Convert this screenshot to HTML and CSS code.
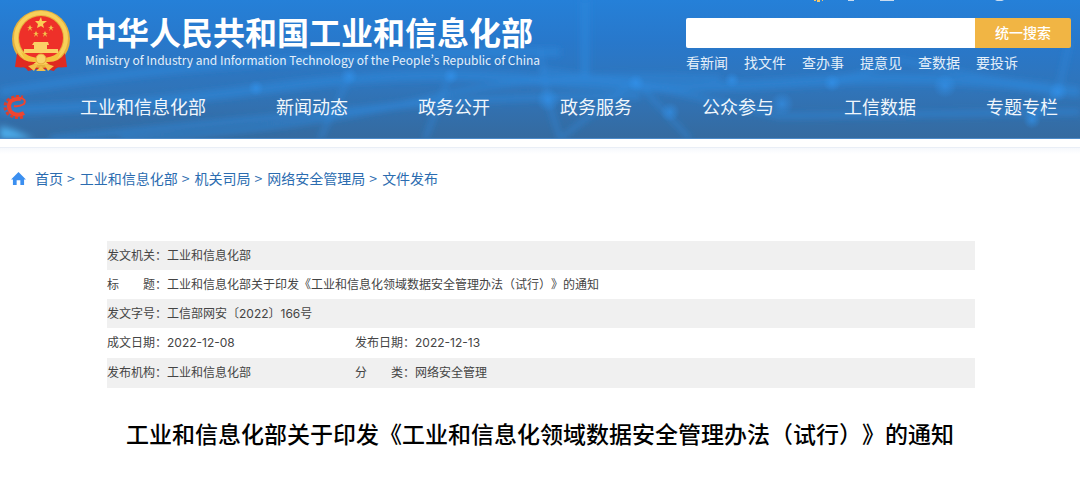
FILE: index.html
```html
<!DOCTYPE html>
<html lang="zh-CN">
<head>
<meta charset="utf-8">
<title>工业和信息化部关于印发《工业和信息化领域数据安全管理办法（试行）》的通知</title>
<link rel="stylesheet" href="styles.css">
</head>
<body>

<header class="header">

	<svg class="header-bg" viewBox="0 0 1080 139" preserveAspectRatio="none" aria-hidden="true">
		<defs>
			<linearGradient id="sky" x1="0" y1="0" x2="0" y2="1">
				<stop offset="0" stop-color="#2580d8"/>
				<stop offset="0.3" stop-color="#2878cb"/>
				<stop offset="0.65" stop-color="#3074b9"/>
				<stop offset="1" stop-color="#356a9f"/>
			</linearGradient>
			<radialGradient id="dot">
				<stop offset="0" stop-color="#3396f2" stop-opacity="0.55"/>
				<stop offset="1" stop-color="#3396f2" stop-opacity="0"/>
			</radialGradient>
			<filter id="soft" x="-10%" y="-50%" width="120%" height="200%">
				<feGaussianBlur stdDeviation="3"/>
			</filter>
		</defs>
		<rect width="1080" height="139" fill="url(#sky)"/>
		<g filter="url(#soft)" fill="none" stroke="#2f88dc" stroke-opacity="0.6">
			<path stroke-width="8" d="M0 92Q130 70 300 60T560 52"/>
			<path stroke-width="10" d="M0 110Q120 108 270 88T540 80T800 82T1080 92"/>
			<path stroke-width="6" d="M50 139Q200 125 350 110T640 96"/>
			<path stroke-width="5" d="M120 139Q300 130 420 100T720 78"/>
			<path stroke-width="5" d="M540 70L640 84L780 116L1080 112"/>
			<path stroke-width="8" d="M585 0V78"/>
			<path stroke-width="4" d="M540 50L548 100L560 139M635 80L560 139M635 80L690 139M1070 40L1058 92L1030 120M350 75L320 139M450 75L425 139M832 83L900 60L1058 92"/>
		</g>
		<path filter="url(#soft)" fill="#4cabea" d="M0 126L14 130L34 139H0z"/>
		<g fill="url(#dot)">
			<circle cx="349" cy="76" r="9"/>
			<circle cx="451" cy="76" r="8"/>
			<circle cx="548" cy="100" r="12"/>
			<circle cx="636" cy="83" r="9"/>
			<circle cx="670" cy="112" r="10"/>
			<circle cx="732" cy="80" r="8"/>
			<circle cx="782" cy="104" r="12"/>
			<circle cx="832" cy="83" r="9"/>
			<circle cx="945" cy="86" r="12"/>
			<circle cx="1058" cy="92" r="10"/>
			<circle cx="1032" cy="120" r="9"/>
			<circle cx="256" cy="88" r="8"/>
		</g>
		<path fill="#4c8ac8" d="M0 138H1080V139H0z"/>
		<path fill="#f4c76b" d="M814 0h2v1h-2zM817 0h3v2h-3zM822 0h1v1h-1z"/>
		<path fill="#c9dcf0" d="M848 0h6v1h-6zM880 0h14v1h-14zM995 0h9l-2 1h-5z"/>
	</svg>

	<div class="header-top">

		<a class="brand" href="#">
			<svg class="emblem" viewBox="0 0 60 62" aria-hidden="true">
				<path fill="#d9271f" d="M8 43L5 57Q14 55 17 61Q30 57 43 61Q46 55 55 57L52 43z"/>
				<circle cx="30" cy="29" r="29" fill="#e5b03c"/>
				<circle cx="30" cy="28" r="25" fill="none" stroke="#f8d05a" stroke-width="4"/>
				<circle cx="30" cy="28" r="22" fill="#ee3029"/>
				<path fill="#fbcf55" d="M30 7l1 4h5l-4 3 1 4-3-2-4 2 1-4-3-3h4z"/>
				<path fill="#f4bf4a" d="M19 15l1 2h2l-2 1 1 3-2-2-2 2 1-3-2-1h2zM40 15l1 2h2l-2 1 1 3-2-2-2 2 1-3-2-1h2zM25 21l1 2h2l-2 1 1 3-2-2-2 2 1-3-2-1h2zM34 21l1 2h2l-2 1 1 3-2-2-2 2 1-3-2-1h2z"/>
				<path fill="#fbd066" d="M23 32h14l1 3h-2v4h11v4H13v-4h10v-4h-2z"/>
				<path fill="#f6c13e" d="M10 42Q30 54 50 42L46 50Q38 54 30 51Q22 54 14 50z"/>
				<circle cx="30" cy="49" r="5" fill="#f8d368" stroke="#e9a93a"/>
				<path fill="#df2a20" d="M6 43Q12 53 25 52Q18 59 4 57zM54 43Q48 53 35 52Q42 59 56 57z"/>
				<path fill="#f4bf4a" d="M17 56L27 54L23 61zM43 56L33 54L37 61zM25 61L30 56L35 61z"/>
			</svg>
			<span class="brand-text">
				<strong class="brand-name">中华人民共和国工业和信息化部</strong>
				<span class="brand-en" lang="en">Ministry of Industry and Information Technology of the People’s Republic of China</span>
			</span>
		</a>

		<div class="search">
			<form class="search-form" action="#">
				<input class="search-input" type="text" name="q" aria-label="搜索">
				<button class="search-btn" type="submit">统一搜索</button>
			</form>
			<div class="search-links">
				<a href="#">看新闻</a>
				<a href="#">找文件</a>
				<a href="#">查办事</a>
				<a href="#">提意见</a>
				<a href="#">查数据</a>
				<a href="#">要投诉</a>
			</div>
		</div>

	</div>

	<nav class="nav">
		<svg class="nav-logo" viewBox="0 0 24 24" aria-hidden="true">
			<path fill="none" stroke="#d8402f" stroke-width="3" stroke-dasharray="3 2" d="M20 22Q12 24 5 19Q-1 11 5 5Q12 0 20 2"/>
			<path fill="none" stroke="#ef4530" stroke-width="4" d="M21 18Q14 22 8 17Q4 11 8 6Q13 3 18 4"/>
			<path fill="none" stroke="#ef4530" stroke-width="2" d="M17 3Q24 4 21 9Q16 12 11 11"/>
		</svg>
		<a href="#">工业和信息化部</a>
		<a href="#">新闻动态</a>
		<a href="#">政务公开</a>
		<a href="#">政务服务</a>
		<a href="#">公众参与</a>
		<a href="#">工信数据</a>
		<a href="#">专题专栏</a>
	</nav>

</header>

<main class="main">

	<div class="crumbs">
		<svg class="home" viewBox="0 0 16 14" aria-hidden="true">
			<path fill="#3b8ff0" d="M8 0L16 8H14V14H10V9H6V14H2V8H0z"/>
		</svg>
		<a href="#">首页</a>
		<span class="sep">&gt;</span>
		<a href="#">工业和信息化部</a>
		<span class="sep">&gt;</span>
		<a href="#">机关司局</a>
		<span class="sep">&gt;</span>
		<a href="#">网络安全管理局</a>
		<span class="sep">&gt;</span>
		<a href="#">文件发布</a>
	</div>

	<table class="info">
		<colgroup>
			<col class="col-label">
			<col class="col-value">
			<col class="col-label">
			<col>
		</colgroup>
		<tr>
			<th scope="row">发文机关：</th>
			<td colspan="3">工业和信息化部</td>
		</tr>
		<tr>
			<th scope="row">标　　题：</th>
			<td colspan="3">工业和信息化部关于印发《工业和信息化领域数据安全管理办法（试行）》的通知</td>
		</tr>
		<tr>
			<th scope="row">发文字号：</th>
			<td colspan="3">工信部网安〔2022〕166号</td>
		</tr>
		<tr class="split">
			<th scope="row">成文日期：</th>
			<td>2022-12-08</td>
			<th scope="row">发布日期：</th>
			<td>2022-12-13</td>
		</tr>
		<tr class="split">
			<th scope="row">发布机构：</th>
			<td>工业和信息化部</td>
			<th scope="row">分　　类：</th>
			<td>网络安全管理</td>
		</tr>
	</table>

	<h1 class="title">工业和信息化部关于印发《工业和信息化领域数据安全管理办法（试行）》的通知</h1>

</main>

</body>
</html>
```

FILE: styles.css
```css
body {
	margin: 0;
	background: #fff;
	font: 14px/20px "Noto Sans CJK SC", sans-serif;
	text-spacing-trim: space-all;
}

a {
	color: inherit;
	text-decoration: none;
}

.header {
	position: relative;
	color: #fff;
}

.header-bg {
	position: absolute;
	top: 0;
	left: 0;
	width: 100%;
	height: 100%;
}

.header-top {
	position: relative;
	display: flex;
	justify-content: space-between;
	padding: 10px 9px 0 11px;
}

.brand {
	display: flex;
	gap: 14px;
}

.emblem {
	width: 60px;
	height: 62px;
}

.brand-text {
	display: flex;
	flex-direction: column;
	white-space: nowrap;
}

.brand-name {
	font-size: 32px;
	line-height: 42px;
}

.brand-en {
	font-size: 12px;
	line-height: 16px;
	font-feature-settings: "pwid";
	color: #e4effa;
}

.search {
	width: 385px;
	padding-top: 8px;
}

.search-form {
	display: flex;
	height: 30px;
}

.search-input {
	flex: 1;
	min-width: 0;
	box-sizing: border-box;
	padding: 0 8px;
	border: 0;
	border-radius: 2px 0 0 2px;
	background: #fff;
	font: inherit;
}

.search-btn {
	width: 96px;
	padding: 0 0 2px;
	border: 0;
	border-radius: 0 2px 2px 0;
	background: #f1b544;
	color: #fff;
	font: 500 14px/20px "Noto Sans CJK SC", sans-serif;
}

.search-links {
	display: flex;
	gap: 16px;
	padding-top: 4px;
	color: #e4effa;
}

.nav {
	position: relative;
	display: flex;
	justify-content: space-between;
	padding: 21px 22px 19px 80px;
	font-size: 18px;
	line-height: 27px;
	white-space: nowrap;
	color: #f0f6fc;
}

.nav-logo {
	position: absolute;
	top: 23px;
	left: 3px;
	width: 24px;
	height: 24px;
}

.main {
	margin-top: 8px;
	border-top: 1px solid #e9eef6;
	background: linear-gradient(#f6f8fc, #fff 6px);
}

.crumbs {
	display: flex;
	align-items: center;
	padding: 20px 11px 0;
	color: #2b6cb0;
}

.home {
	width: 15px;
	height: 13px;
	margin-right: 9px;
}

.sep {
	margin: 0 5px 0 4px;
}

.info {
	width: calc(100% - 212px);
	margin: 53px 105px 0 107px;
	border-collapse: collapse;
	table-layout: fixed;
	font: 12px/16px Inter, "Noto Sans CJK SC", sans-serif;
	color: #444;
}

.info th,
.info td {
	height: 29px;
	padding: 0;
	font-weight: normal;
	text-align: left;
	white-space: nowrap;
}

.info .split th,
.info .split td {
	height: 30px;
}

.info tr:nth-child(odd) {
	background: #f0f0f0;
}

.col-label {
	width: 60px;
}

.col-value {
	width: 188px;
}

.title {
	margin: 28px 0;
	font-size: 23px;
	line-height: 34px;
	font-weight: 500;
	text-align: center;
	color: #000;
}
```
